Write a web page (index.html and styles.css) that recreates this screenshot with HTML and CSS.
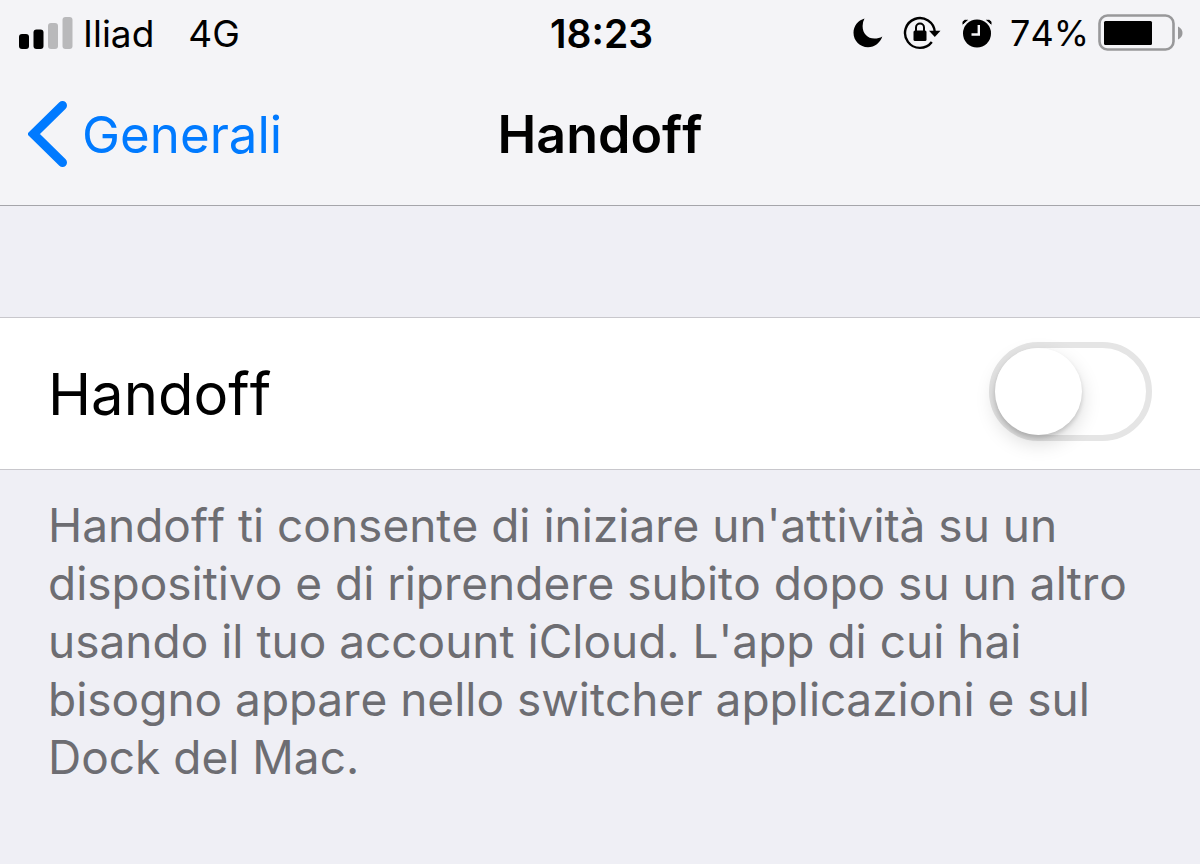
FILE: index.html
```
<!DOCTYPE html>
<html lang="it">
<head>
  <meta charset="UTF-8">
  <meta name="viewport" content="width=device-width, initial-scale=1">
  <title>Handoff</title>
  <link rel="stylesheet" href="styles.css">
</head>
<body>
  <header class="top">
    <!-- barra di stato -->
    <div class="status">
      <div class="status-left">
        <svg class="signal" width="54" height="32" viewBox="0 0 54 32" aria-hidden="true">
          <rect x="0" y="17" width="10" height="15" rx="3"/>
          <rect x="14.5" y="12.5" width="10" height="19.5" rx="3"/>
          <rect x="29" y="6" width="10" height="26" rx="3" fill="#b9b9bb"/>
          <rect x="43.5" y="0" width="10" height="32" rx="3" fill="#b9b9bb"/>
        </svg>
        <span class="carrier">Iliad</span>
        <span>4G</span>
      </div>
      <time class="clock">18:23</time>
      <div class="status-right">
        <svg class="moon" width="30" height="30" viewBox="0 0 30 30" aria-hidden="true">
          <path d="M11.5 .6A15.300 15.300 0 0 0 9.600 8C9.600 15.500 14.500 20.600 21.500 20.600C24.400 20.600 27 20 29.300 18.500C27.300 24.700 21.600 29.200 15 29.200C6.900 29.200.5 22.700.5 14.700C.5 8.200 5 2.500 11.500.6Z"/>
        </svg>
        <svg class="lock" width="38" height="34" viewBox="0 0 38 34" aria-hidden="true">
          <path d="M31.800 16A14.900 14.900 0 1 0 28.800 26" fill="none" stroke="#000" stroke-width="2.400"/>
          <path d="M26 14.800H37.500L31.800 21Z"/>
          <rect x="10.500" y="14.500" width="13" height="10.500" rx="1.500"/>
          <path d="M13 15V11.500a4 4 0 0 1 8 0V15" fill="none" stroke="#000" stroke-width="2"/>
        </svg>
        <svg class="alarm" width="32" height="30" viewBox="0 0 32 30" aria-hidden="true">
          <circle cx="16" cy="15.500" r="14"/>
          <path d="M1.500 7.500C-.5 3.500 3 0 8 1.600ZM30.500 7.500C32.500 3.500 29 0 24 1.600Z" stroke="#f4f4f7" stroke-width="1"/>
          <path d="M17.800 7V16.500H10.500" fill="none" stroke="#f4f4f7" stroke-width="2.400"/>
        </svg>
        <span class="level">74%</span>
        <svg class="battery" width="86" height="38" viewBox="0 0 86 38" aria-hidden="true">
          <rect x="1.500" y="1.500" width="74" height="34" rx="8" fill="none" stroke="#98989a" stroke-width="2.600"/>
          <rect x="6" y="7" width="48" height="24" rx="1.500"/>
          <path d="M80 12.500C86 15 86 23 80 25.500Z" fill="#98989a"/>
        </svg>
      </div>
    </div>

    <!-- navigazione -->
    <nav class="nav">
      <a class="back" href="#">
        <svg width="40" height="68" viewBox="0 0 40 68" aria-hidden="true">
          <path d="M34.500 5.500L5.500 34L34.500 62.500" fill="none" stroke="#007aff" stroke-width="9" stroke-linecap="round"/>
        </svg>
        Generali
      </a>
      <h1>Handoff</h1>
    </nav>
  </header>

  <main>
    <div class="row">
      <label for="handoff">Handoff</label>
      <input class="switch" type="checkbox" role="switch" id="handoff" aria-describedby="info">
    </div>
    <p class="info" id="info">Handoff ti consente di iniziare un'attività su un dispositivo e di riprendere subito dopo su un altro usando il tuo account iCloud. L'app di cui hai bisogno appare nello switcher applicazioni e sul Dock del Mac.</p>
  </main>
</body>
</html>
```
FILE: styles.css
```
* {
  box-sizing: border-box;
}
body {
  margin: 0;
  background-color: #efeff5;
  color: #000;
  font-family: Inter, "Liberation Sans", sans-serif;
  font-kerning: none;
}
svg {
  display: block;
  flex-shrink: 0;
}
.top {
  background-color: #f4f4f7;
  border-bottom: 1px solid #a5a5aa;
}

/* status bar */
.status {
  display: grid;
  grid-template-columns: 1fr auto 1fr;
  align-items: center;
  height: 66px;
  padding: 0 16px 0 19px;
  font-size: 37px;
}
.status-left,
.status-right {
  display: flex;
  align-items: center;
}
.status-right {
  justify-content: flex-end;
}
.signal {
  margin-right: 10px;
}
.carrier {
  margin-right: 34px;
}
.clock {
  font-size: 39px;
  font-weight: 600;
}
.level {
  font-size: 36px;
}
.moon,
.lock {
  margin-right: 20px;
}
.alarm {
  margin-right: 17px;
}
.battery {
  margin-left: 9px;
}

/* navigation bar */
.nav {
  display: grid;
  grid-template-columns: 1fr auto 1fr;
  align-items: center;
  height: 139px;
  padding: 0 28px 3px;
}
.back {
  display: flex;
  align-items: center;
  gap: 14px;
  color: #007aff;
  font-size: 51px;
  text-decoration: none;
}
.nav h1 {
  margin: 0;
  font-size: 52px;
  font-weight: 600;
}

/* settings */
.row {
  display: flex;
  align-items: center;
  justify-content: space-between;
  height: 153px;
  margin-top: 111px;
  padding: 0 48px 4px;
  background-color: #fff;
  border-top: 1px solid #c8c7cc;
  border-bottom: 1px solid #c8c7cc;
  font-size: 58px;
}
.row label {
  padding-top: 4px;
}
.switch {
  appearance: none;
  width: 163px;
  height: 99px;
  margin: 0;
  border: 6px solid #e5e5e5;
  border-radius: 50px;
  background-color: #fff;
  cursor: pointer;
}
.switch::before {
  content: "";
  display: block;
  width: 87px;
  height: 87px;
  border-radius: 50%;
  background-color: #fff;
  box-shadow: 0 8px 20px rgba(0, 0, 0, 0.15), 0 3px 4px rgba(0, 0, 0, 0.15);
}
.switch:checked {
  border-color: #4cd964;
  background-color: #4cd964;
}
.switch:checked::before {
  margin-left: auto;
}
.info {
  margin: 0;
  padding: 26px 48px;
  color: #6d6d72;
  font-size: 46px;
  line-height: 58px;
}
```
